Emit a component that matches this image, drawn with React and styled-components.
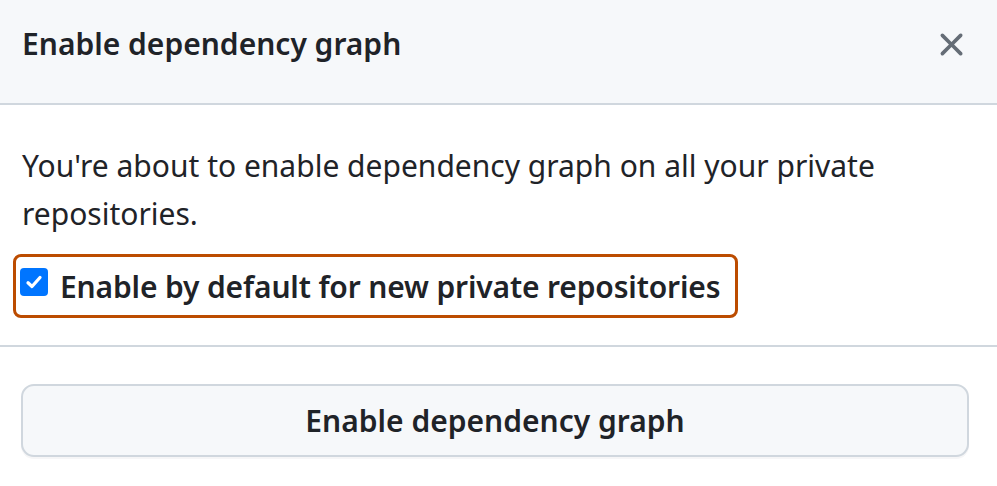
import React from "react";
import styled, { createGlobalStyle } from "styled-components";

const Global = createGlobalStyle`
  html, body { margin: 0; padding: 0; background: #ffffff; }
  body { font-family: "Noto Sans", "Liberation Sans", sans-serif; color: #1f2328; }
  * { box-sizing: border-box; }
`;

const Dialog = styled.div`
  width: 997px;
  height: 486px;
  display: flex;
  flex-direction: column;
  background: #ffffff;
`;

const Header = styled.div`
  height: 105px;
  display: flex;
  align-items: center;
  justify-content: space-between;
  padding: 0 22px 16px 22px;
  background: #f6f8fa;
  border-bottom: 2px solid #d0d7de;
`;

const Title = styled.h1`
  margin: 0;
  font-size: 30px;
  line-height: 41px;
  font-weight: 600;
  color: #1f2328;
`;

const CloseButton = styled.button`
  width: 48px;
  height: 48px;
  display: flex;
  align-items: center;
  justify-content: center;
  border: none;
  background: transparent;
  color: #656d76;
  padding: 0;
  margin-top: 2px;
`;

const Body = styled.div`
  padding: 37px 22px 27px 13px;
  display: flex;
  flex-direction: column;
  gap: 16px;
  border-bottom: 2px solid #d0d7de;
`;

const Text = styled.p`
  margin: 0 0 0 9px;
  font-size: 30px;
  line-height: 48px;
  color: #1f2328;
`;

const CheckRow = styled.label`
  align-self: flex-start;
  display: flex;
  align-items: center;
  gap: 12px;
  height: 64px;
  padding: 0 15px 0 4px;
  border: 3px solid #bc4c00;
  border-radius: 8px;
  font-size: 30px;
  line-height: 41px;
  font-weight: 600;
  letter-spacing: -0.15px;
  color: #1f2328;
`;

const Box = styled.span`
  width: 28px;
  height: 28px;
  flex: none;
  border-radius: 4px;
  background: #0075ff;
  display: flex;
  align-items: center;
  justify-content: center;
  margin-top: -8px;
`;

const Footer = styled.div`
  padding: 37px 28px 0 21px;
`;

const PrimaryButton = styled.button`
  width: 100%;
  height: 73px;
  border: 2px solid #d0d7de;
  border-radius: 13px;
  background: #f6f8fa;
  box-shadow: 0 2px 0 rgba(31, 35, 40, 0.04);
  font-family: inherit;
  font-size: 30px;
  line-height: 41px;
  font-weight: 600;
  color: #1f2328;
`;

export default function App() {
  return (
    <>
      <Global />
      <Dialog>
        <Header>
          <Title>Enable dependency graph</Title>
          <CloseButton aria-label="Close">
            <svg width="39" height="39" viewBox="0 0 16 16" fill="currentColor">
              <path d="M3.72 3.72a.75.75 0 0 1 1.06 0L8 6.94l3.220-3.22a.749.749 0 0 1 1.275.326.749.749 0 0 1-.215.734L9.06 8l3.22 3.22a.749.749 0 0 1-.326 1.275.749.749 0 0 1-.734-.215L8 9.06l-3.22 3.22a.751.751 0 0 1-1.042-.018.751.751 0 0 1-.018-1.042L6.94 8 3.72 4.780a.75.75 0 0 1 0-1.06Z" />
            </svg>
          </CloseButton>
        </Header>
        <Body>
          <Text>
            You're about to enable dependency graph on all your private
            repositories.
          </Text>
          <CheckRow>
            <Box>
              <svg width="20" height="20" viewBox="0 0 16 16">
                <path d="M3.2 8.6 L6.4 11.6 L12.8 4.4" fill="none" stroke="#fff" strokeWidth="2.6" strokeLinecap="round" strokeLinejoin="round" />
              </svg>
            </Box>
            Enable by default for new private repositories
          </CheckRow>
        </Body>
        <Footer>
          <PrimaryButton>Enable dependency graph</PrimaryButton>
        </Footer>
      </Dialog>
    </>
  );
}
